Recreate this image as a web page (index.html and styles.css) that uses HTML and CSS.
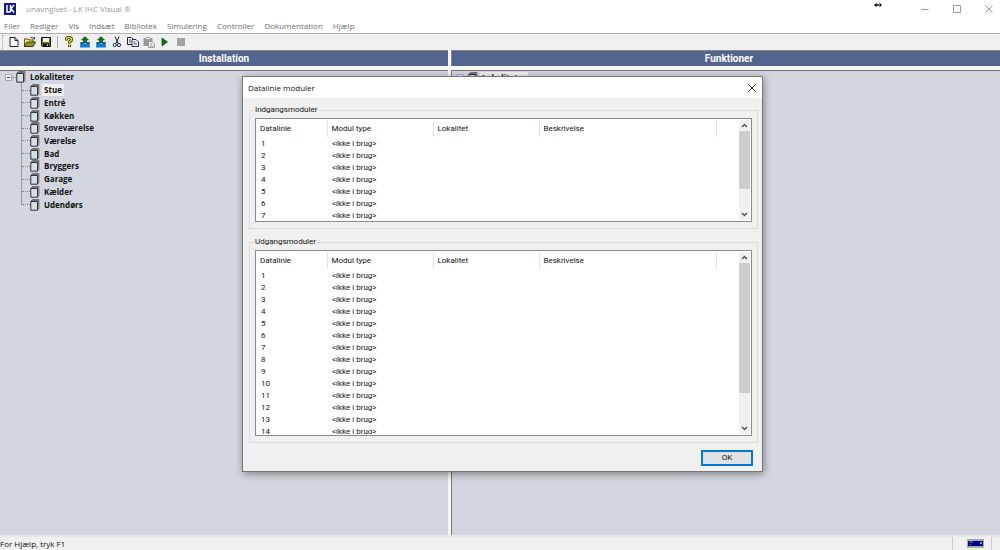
FILE: index.html
```html
<!DOCTYPE html>
<html lang="da">
<head>
<meta charset="utf-8">
<title>unavngivet - LK IHC Visual ®</title>
<link rel="stylesheet" href="styles.css">
</head>
<body>
<svg class="defs" aria-hidden="true">
  <symbol id="page" viewBox="0 0 10 12"><path d="M2 .5H9.500V9.500L8 11.500V2.500H1Z" fill="#858585"/><path d="M.8 2.500H7.500V11.200H.8Z" fill="#d9dde4" stroke="#333"/><path d="M1 2.300L2.500.8H9" fill="none" stroke="#444" stroke-width=".8"/></symbol>
  <symbol id="up" viewBox="0 0 11 12"><path d="M1 6H4V8H7V6H10L10.500 11.500H.5Z" fill="#087bd0"/><path d="M1 7H10" stroke="#124" stroke-width=".8"/><path d="M5.500.5L9 4H7V6.500H4V4H2Z" fill="#087a18" stroke="#132" stroke-width=".6"/></symbol>
  <symbol id="chev-up" viewBox="0 0 7 5"><path d="M1 4L3.5 1.5L6 4" fill="none" stroke="#555" stroke-width="1.5"/></symbol>
  <symbol id="chev-down" viewBox="0 0 7 5"><path d="M1 1L3.5 3.5L6 1" fill="none" stroke="#555" stroke-width="1.5"/></symbol>
</svg>
<div class="app">
  <header class="titlebar">
    <svg class="logo" viewBox="0 0 12 12" aria-hidden="true"><path d="M0 0H12V12H0Z" fill="#17178c"/><path d="M3 2V9H6.500M6.500 2V9M10 2L7 5.500L10 9.500" fill="none" stroke="#fff" stroke-width="1.500"/></svg>
    <span class="app-name">unavngivet - LK IHC Visual ®</span>
    <div class="window-controls">
      <button aria-label="Minimer"><svg viewBox="0 0 8 8"><path d="M.5 4.500H7.500" stroke="#999"/></svg></button>
      <button aria-label="Maksimer"><svg viewBox="0 0 8 8"><path d="M.5.5H7.500V7.500H.5Z" fill="none" stroke="#999"/></svg></button>
      <button aria-label="Luk"><svg viewBox="0 0 8 8"><path d="M.5.5L7.500 7.500M7.500.5L.5 7.500" stroke="#999"/></svg></button>
    </div>
    <svg class="cursor" viewBox="0 0 8 6" aria-hidden="true"><path d="M0 3L2.500.8V5.200ZM8 3L5.500.8V5.200ZM2 2.300H6V3.700H2Z" fill="#111"/></svg>
  </header>
  <nav class="menu">
    <button>Filer</button><button>Rediger</button><button>Vis</button><button>Indsæt</button><button>Bibliotek</button><button>Simulering</button><button>Controller</button><button>Dokumentation</button><button>Hjælp</button>
  </nav>
  <div class="toolbar">
    <span class="grip"></span>
    <button aria-label="Ny"><svg viewBox="0 0 12 12"><path d="M2 1.500H7L10 4.500V10.500H2Z" fill="#fff" stroke="#222"/><path d="M7 1.500V4.500H10" fill="none" stroke="#222"/></svg></button>
    <button aria-label="Åbn"><svg viewBox="0 0 12 12"><path d="M.5 10.500V3H4L5 4H9V6" fill="#f3ee70" stroke="#54520c"/><path d="M.5 10.500L3 6H11.500L9 10.500Z" fill="#96941b" stroke="#3c3a08"/><path d="M6 2Q8 0 10 2.500M10.500 1V3H8.500" fill="none" stroke="#222" stroke-width=".8"/></svg></button>
    <button aria-label="Gem"><svg viewBox="0 0 12 12"><path d="M1.500 1.500H10.500V10.500H2.500L1.500 9.500Z" fill="#77751a" stroke="#111"/><path d="M3 2H9V6H3Z" fill="#f1f1e8"/><path d="M3 7.500H9V10.500H3Z" fill="#111"/><path d="M7 8.500H8V10H7Z" fill="#eee"/></svg></button>
    <span class="separator"></span>
    <button aria-label="Hjælp"><svg viewBox="0 0 12 12"><path d="M3.500 4.500V3Q3.500 1.500 6 1.500T8.500 3.500Q8.500 5 6.500 6V7.500M6.500 8.700V11" fill="none" stroke="#222" stroke-width="3"/><path d="M3.500 4.300V3Q3.500 1.500 6 1.500T8.500 3.500Q8.500 5 6.500 6V7.500M6.500 9V10.700" fill="none" stroke="#e6d900" stroke-width="1.500"/></svg></button>
    <button aria-label="Send"><svg viewBox="0 0 11 12"><use href="#up"/></svg></button>
    <button aria-label="Hent"><svg viewBox="0 0 11 12"><use href="#up"/></svg></button>
    <button aria-label="Klip"><svg viewBox="0 0 12 12"><path d="M4 0.500L7 7.500M8 .5L5 7.500" stroke="#222" fill="none"/><circle cx="3.800" cy="9" r="1.600" fill="none" stroke="#202090"/><circle cx="8" cy="9" r="1.600" fill="none" stroke="#202090"/></svg></button>
    <button aria-label="Kopier"><svg viewBox="0 0 12 12"><path d="M.5 1.500H4.500L6.500 3.500V8.500H.5Z" fill="#fff" stroke="#222"/><path d="M5 3.500H9L11.500 6V10.500H5Z" fill="#fff" stroke="#202090"/><path d="M2 4H4M2 6H4M6.500 6H8.500M6.500 8H10" stroke="#335"/></svg></button>
    <button aria-label="Sæt ind"><svg viewBox="0 0 12 12"><path d="M.5 2H3L4 .8H6L7 2H9.500V10H.5Z" fill="#999"/><path d="M3 2.500H7" stroke="#eee"/><path d="M5.500 5.500H9L11.500 8V11.500H5.500Z" fill="#eee" stroke="#999"/><path d="M7 8H9M7 10H10" stroke="#999"/></svg></button>
    <button aria-label="Start"><svg viewBox="0 0 12 12"><path d="M3 2L8.500 6L3 10Z" fill="#087a08" stroke="#063c06" stroke-width=".6"/></svg></button>
    <button aria-label="Stop"><svg viewBox="0 0 12 12"><path d="M2 2H10V10H2Z" fill="#a3a3a3"/></svg></button>
  </div>
  <main class="panes">
    <section class="pane">
      <h2>Installation</h2>
      <div class="pane-body">
        <ul class="tree">
          <li class="root"><span class="expander"></span><svg><use href="#page"/></svg><span>Lokaliteter</span></li>
          <li><svg><use href="#page"/></svg><span class="selected">Stue</span></li>
          <li><svg><use href="#page"/></svg><span>Entré</span></li>
          <li><svg><use href="#page"/></svg><span>Køkken</span></li>
          <li><svg><use href="#page"/></svg><span>Soveværelse</span></li>
          <li><svg><use href="#page"/></svg><span>Værelse</span></li>
          <li><svg><use href="#page"/></svg><span>Bad</span></li>
          <li><svg><use href="#page"/></svg><span>Bryggers</span></li>
          <li><svg><use href="#page"/></svg><span>Garage</span></li>
          <li><svg><use href="#page"/></svg><span>Kælder</span></li>
          <li><svg><use href="#page"/></svg><span>Udendørs</span></li>
        </ul>
      </div>
    </section>
    <section class="pane">
      <h2>Funktioner</h2>
      <div class="pane-body">
        <ul class="tree single">
          <li class="root"><span class="expander"></span><svg><use href="#page"/></svg><span class="selected">Lokaliteter</span></li>
        </ul>
      </div>
    </section>
  </main>
  <footer class="status">
    <span class="hint">For Hjælp, tryk F1</span>
    <span class="device"><svg viewBox="0 0 17 9" aria-hidden="true"><path d="M0 0H17V9H0Z" fill="#aaa"/><path d="M1 2H16V7H1Z" fill="#00008c"/><path d="M2 2H6V4H2Z" fill="#3c5080"/><path d="M3 5H4V6H3Z" fill="#0f3"/><path d="M13 3H15V5H13Z" fill="#8c8cb8"/></svg></span>
    <span class="corner"></span>
  </footer>
</div>

<div class="dialog" role="dialog" aria-labelledby="dialog-title">
  <div class="dialog-title">
    <h1 id="dialog-title">Datalinie moduler</h1>
    <button aria-label="Luk dialog"><svg viewBox="0 0 8 8"><path d="M.5.5L7.500 7.500M7.500.5L.5 7.500" stroke="#222"/></svg></button>
  </div>
  <div class="dialog-body">
    <fieldset>
      <legend>Indgangsmoduler</legend>
      <div class="list inputs">
        <div class="view">
          <table>
            <thead><tr><th class="narrow">Datalinie</th><th class="medium">Modul type</th><th class="medium">Lokalitet</th><th class="wide">Beskrivelse</th><td></td></tr></thead>
            <tbody>
              <tr><td>1</td><td>&lt;ikke i brug&gt;</td></tr>
              <tr><td>2</td><td>&lt;ikke i brug&gt;</td></tr>
              <tr><td>3</td><td>&lt;ikke i brug&gt;</td></tr>
              <tr><td>4</td><td>&lt;ikke i brug&gt;</td></tr>
              <tr><td>5</td><td>&lt;ikke i brug&gt;</td></tr>
              <tr><td>6</td><td>&lt;ikke i brug&gt;</td></tr>
              <tr><td>7</td><td>&lt;ikke i brug&gt;</td></tr>
            </tbody>
          </table>
        </div>
        <div class="scrollbar"><button aria-label="Rul op"><svg><use href="#chev-up"/></svg></button><span class="track"><span class="thumb"></span></span><button aria-label="Rul ned"><svg><use href="#chev-down"/></svg></button></div>
      </div>
    </fieldset>
    <fieldset>
      <legend>Udgangsmoduler</legend>
      <div class="list outputs">
        <div class="view">
          <table>
            <thead><tr><th class="narrow">Datalinie</th><th class="medium">Modul type</th><th class="medium">Lokalitet</th><th class="wide">Beskrivelse</th><td></td></tr></thead>
            <tbody>
              <tr><td>1</td><td>&lt;ikke i brug&gt;</td></tr>
              <tr><td>2</td><td>&lt;ikke i brug&gt;</td></tr>
              <tr><td>3</td><td>&lt;ikke i brug&gt;</td></tr>
              <tr><td>4</td><td>&lt;ikke i brug&gt;</td></tr>
              <tr><td>5</td><td>&lt;ikke i brug&gt;</td></tr>
              <tr><td>6</td><td>&lt;ikke i brug&gt;</td></tr>
              <tr><td>7</td><td>&lt;ikke i brug&gt;</td></tr>
              <tr><td>8</td><td>&lt;ikke i brug&gt;</td></tr>
              <tr><td>9</td><td>&lt;ikke i brug&gt;</td></tr>
              <tr><td>10</td><td>&lt;ikke i brug&gt;</td></tr>
              <tr><td>11</td><td>&lt;ikke i brug&gt;</td></tr>
              <tr><td>12</td><td>&lt;ikke i brug&gt;</td></tr>
              <tr><td>13</td><td>&lt;ikke i brug&gt;</td></tr>
              <tr><td>14</td><td>&lt;ikke i brug&gt;</td></tr>
            </tbody>
          </table>
        </div>
        <div class="scrollbar"><button aria-label="Rul op"><svg><use href="#chev-up"/></svg></button><span class="track"><span class="thumb"></span></span><button aria-label="Rul ned"><svg><use href="#chev-down"/></svg></button></div>
      </div>
    </fieldset>
    <div class="actions"><button class="ok">OK</button></div>
  </div>
</div>
</body>
</html>
```

FILE: styles.css
```css
* { box-sizing: border-box; }
body { margin: 0; font: 8px/12px "Open Sans", "Noto Sans", sans-serif; color: #111; }
button { margin: 0; padding: 0; border: 0; background: none; font: inherit; color: inherit; }
svg { display: block; }
h1, h2, ul { margin: 0; padding: 0; }
.defs { position: absolute; width: 0; height: 0; }

.app { display: flex; flex-direction: column; height: 100vh; background: #f0f0f0; overflow: hidden; }

.titlebar { position: relative; display: flex; align-items: center; height: 17px; padding: 0 7px 0 4px; background: #fff; color: #999; }
.logo { width: 12px; height: 12px; margin-right: 10px; }
.app-name { flex: 1; }
.window-controls { display: flex; gap: 24px; }
.window-controls svg { width: 8px; height: 8px; }
.cursor { position: absolute; right: 118px; top: 2px; width: 8px; height: 6px; }

.menu { display: flex; align-items: center; gap: 10px; height: 17px; padding: 2px 4px 0; background: #fff; border-bottom: 1px solid #b0b0b0; color: #6d6d6d; }

.toolbar { display: flex; align-items: center; height: 16px; padding-left: 2px; gap: 4px; }
.toolbar svg { width: 12px; height: 12px; }
.grip { height: 14px; border-left: 1px dotted #aaa; margin-right: 1px; }
.separator { width: 1px; height: 12px; background: #aaa; margin: 0 1px; }

.panes { flex: 1; display: grid; grid-template-columns: 448px 1fr; gap: 3px; min-height: 0; background: #f6f6f6; }
.pane { display: flex; flex-direction: column; gap: 4px; min-width: 0; }
.pane h2 { height: 16px; padding-left: 6px; border: 1px solid #888; border-width: 1px 0 0 1px; background: #53658f; color: #fff; font: bold 10px/16px Roboto, sans-serif; text-align: center; }
.pane-body { flex: 1; border: solid #777; border-width: 1px 0 0 1px; background: #d2d7df; }
.pane:first-child h2 { padding: 0; }
.pane:first-child h2, .pane:first-child .pane-body { border-left: 0; }

.tree { display: grid; grid-auto-rows: 1fr; height: 140px; list-style: none; font-weight: bold; background: linear-gradient(#999, #999) 21px 12px / 1px 122px no-repeat; }
.tree.single { height: 13px; background: none; }
.tree li { display: flex; align-items: center; padding-left: 22px; }
.tree li::before { content: ""; width: 8px; border-top: 1px dotted #888; }
.tree li svg { width: 10px; height: 12px; }
.tree li span:last-child { padding: 0 2px; margin-left: 2px; }
.tree .root { padding-left: 5px; }
.tree .root::before { order: 1; width: 4px; }
.tree .root svg { order: 2; }
.tree .root span:last-child { order: 3; }
.expander { width: 7px; height: 7px; border: 1px solid #aab; background: linear-gradient(#446, #446) center / 3px 1px no-repeat #eef; }
.tree .selected { background: #f0f0f0; }

.status { display: flex; align-items: stretch; height: 15px; border-top: 2px solid #e7e7e7; }
.hint { flex: 1; line-height: 13px; }
.device { display: flex; align-items: center; justify-content: center; width: 40px; border: solid #ccc; border-width: 0 1px; padding-left: 6px; }
.device svg { width: 17px; height: 9px; }
.corner { width: 8px; }

.dialog { position: absolute; left: 242px; top: 76px; width: 521px; border: 1px solid #777; background: #f0f0f0; box-shadow: 1px 2px 8px rgba(0, 0, 0, .4); font-family: Roboto, sans-serif; }
.dialog-title { display: flex; align-items: center; justify-content: space-between; height: 21px; padding: 0 6px 0 5px; background: #fff; }
.dialog-title h1 { font: 8px/12px "Open Sans", sans-serif; }
.dialog-title svg { width: 8px; height: 8px; }
.dialog-body { padding: 6px 4px 5px 6px; }
fieldset { min-width: 0; margin: 0 0 6px; padding: 2px 5px 6px; border: 1px solid #dcdcdc; }
fieldset:first-child { margin-bottom: 7px; }
legend { padding: 0 1px; margin-left: -1px; line-height: 12px; }
.list { display: flex; padding: 1px; border: 1px solid #888b94; background: #fff; }
.inputs { height: 104px; }
.outputs { height: 186px; }
.view { flex: 1; overflow: hidden; }
table { width: 100%; table-layout: fixed; border-collapse: collapse; }
th { height: 17px; padding: 0 4px; border-right: 1px solid #e5e5e5; font-weight: normal; text-align: left; }
tbody td { height: 12px; padding: 0 5px; line-height: 12px; }
th:first-child { padding-left: 3px; }
tbody td:first-child { padding-left: 4px; }
tbody::before { content: ""; display: block; height: 1px; }
.narrow { width: 70px; }
.medium { width: 106px; }
.wide { width: 177px; }
.scrollbar { display: flex; flex-direction: column; width: 11px; background: #f0f0f0; }
.scrollbar button { display: flex; align-items: center; justify-content: center; height: 11px; }
.scrollbar svg { width: 7px; height: 5px; }
.track { flex: 1; }
.thumb { display: block; height: 74%; background: #cdcdcd; }
.outputs .thumb { height: 81%; }
.actions { display: flex; justify-content: flex-end; padding: 1px 5px 0 0; }
.ok { width: 52px; height: 16px; border: 2px solid #0078d7; background: #e1e1e1; }
```
